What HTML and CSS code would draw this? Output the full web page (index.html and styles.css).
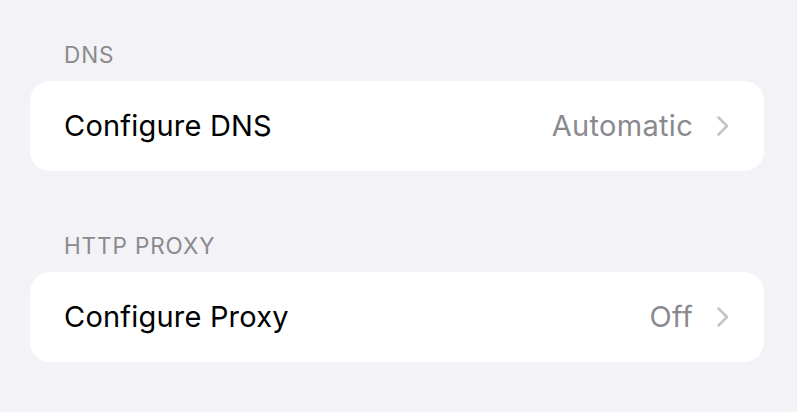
FILE: index.html
```html
<!DOCTYPE html>
<html>
<head>
<meta charset="utf-8">
<link rel="stylesheet" href="styles.css">
</head>
<body>
<main class="page">
  <section class="group">
    <div class="group-header">DNS</div>
    <div class="card">
      <div class="row">
        <span class="label">Configure DNS</span>
        <span class="detail">Automatic</span>
        <svg class="chevron" width="14" height="22" viewBox="0 0 14 22"><polyline points="2.5,2.5 11,11 2.5,19.5" fill="none" stroke="#c4c4c7" stroke-width="2.6" stroke-linecap="round" stroke-linejoin="round"/></svg>
      </div>
    </div>
  </section>
  <section class="group">
    <div class="group-header">HTTP PROXY</div>
    <div class="card">
      <div class="row">
        <span class="label">Configure Proxy</span>
        <span class="detail">Off</span>
        <svg class="chevron" width="14" height="22" viewBox="0 0 14 22"><polyline points="2.5,2.5 11,11 2.5,19.5" fill="none" stroke="#c4c4c7" stroke-width="2.6" stroke-linecap="round" stroke-linejoin="round"/></svg>
      </div>
    </div>
  </section>
</main>
</body>
</html>
```
FILE: styles.css
```css
html, body {
  margin: 0;
  padding: 0;
  background: #f2f2f7;
}
body {
  width: 797px;
  height: 412px;
  overflow: hidden;
  font-family: Inter, "Liberation Sans", sans-serif;
}
.page {
  display: flex;
  flex-direction: column;
  gap: 62px;
  padding: 42px 33px 0 30px;
}
.group {
  display: flex;
  flex-direction: column;
  gap: 13px;
}
.group-header {
  font-size: 22.5px;
  line-height: 26px;
  letter-spacing: 0.9px;
  color: #8a8a8e;
  padding-left: 34px;
}
.card {
  background: #ffffff;
  border-radius: 20px;
  height: 90px;
  display: flex;
  align-items: center;
  padding: 0 34px;
}
.row {
  display: flex;
  align-items: center;
  width: 100%;
}
.label {
  flex: 1;
  font-size: 29px;
  line-height: 34px;
  letter-spacing: 0.2px;
  color: #000;
}
.detail {
  font-size: 29px;
  line-height: 34px;
  letter-spacing: 0.3px;
  color: #8a8a8e;
  margin-right: 23px;
}
.chevron {
  display: block;
}
```
